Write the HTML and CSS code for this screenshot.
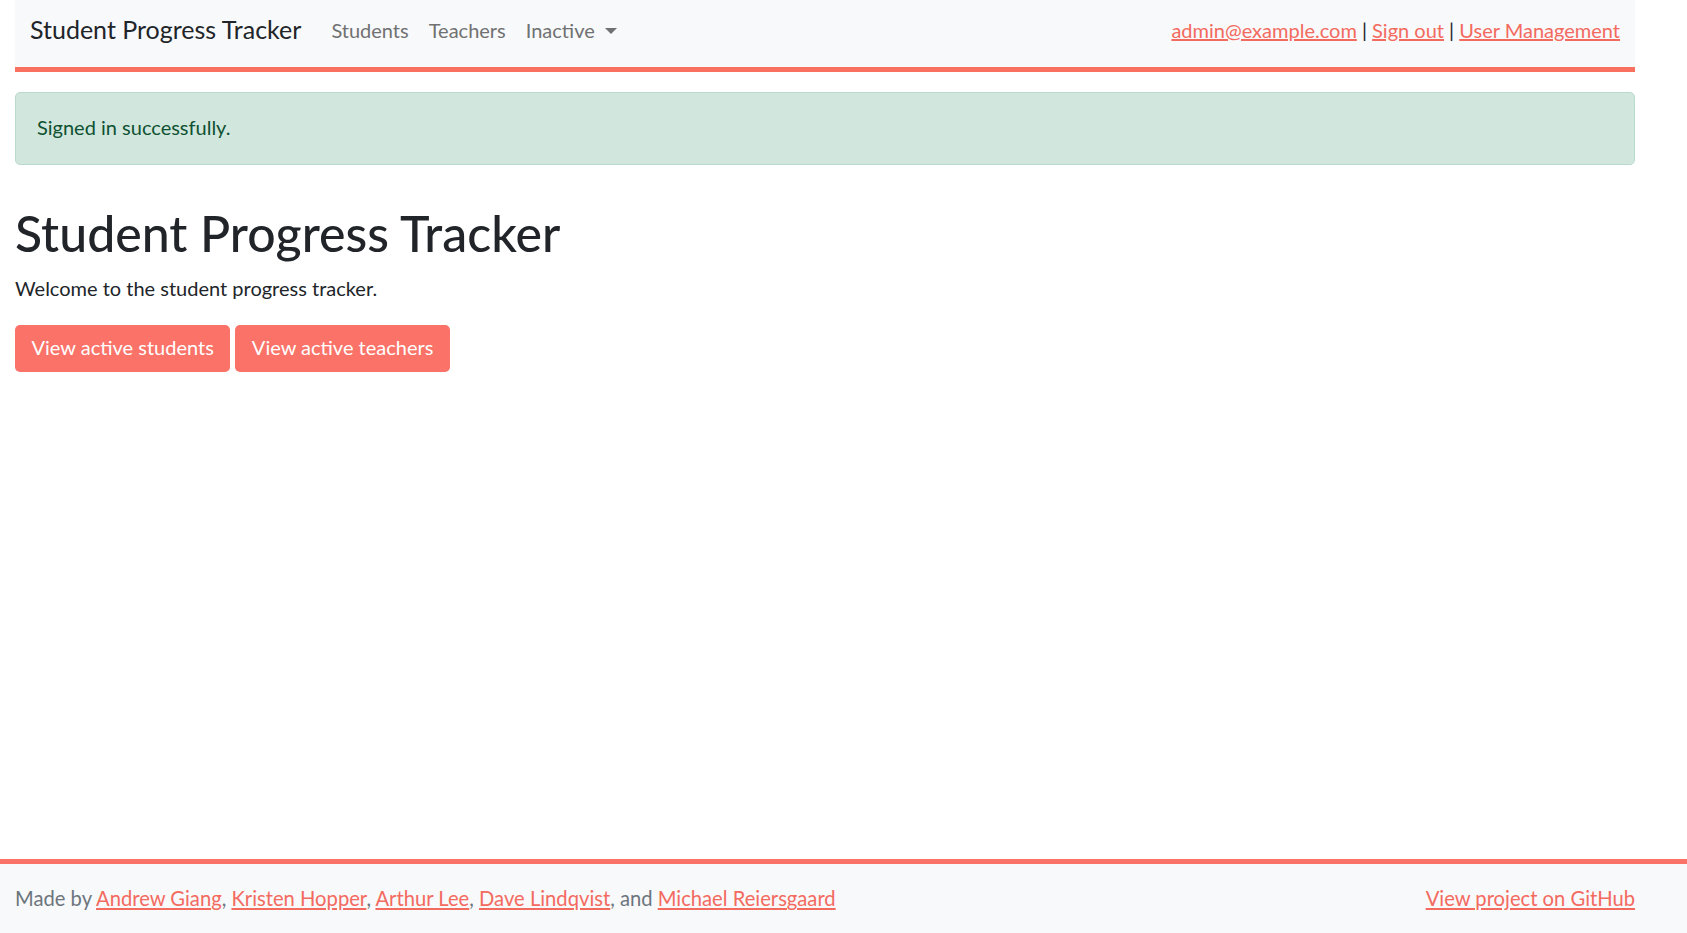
FILE: index.html
```html
<!DOCTYPE html>
<html lang="en">
<head>
<meta charset="utf-8">
<title>Student Progress Tracker</title>
<link rel="stylesheet" href="styles.css">
</head>
<body>
<div class="page">
  <nav class="navbar">
    <a class="brand" href="#">Student Progress Tracker</a>
    <ul class="nav-links">
      <li><a href="#">Students</a></li>
      <li><a href="#">Teachers</a></li>
      <li><a href="#" class="dropdown">Inactive<span class="caret"></span></a></li>
    </ul>
    <div class="nav-right">
      <a href="#">admin@example.com</a> | <a href="#">Sign out</a> | <a href="#">User Management</a>
    </div>
  </nav>
  <main class="content">
    <div class="alert">Signed in successfully.</div>
    <h1 class="title">Student Progress Tracker</h1>
    <p class="lead">Welcome to the student progress tracker.</p>
    <div class="actions">
      <a href="#" class="btn">View active students</a>
      <a href="#" class="btn">View active teachers</a>
    </div>
  </main>
</div>
<footer class="footer">
  <div class="footer-inner">
    <div class="credits">Made by <a href="#">Andrew Giang</a>, <a href="#">Kristen Hopper</a>, <a href="#">Arthur Lee</a>, <a href="#">Dave Lindqvist</a>, and <a href="#">Michael Reiersgaard</a></div>
    <a href="#" class="repo">View project on GitHub</a>
  </div>
</footer>
</body>
</html>
```

FILE: styles.css
```css
* { box-sizing: border-box; }
html, body { margin: 0; padding: 0; }
body {
  font-family: Lato, "Open Sans", sans-serif;
  font-size: 20px;
  line-height: 1.5;
  color: #212529;
  background: #fff;
  min-height: 100vh;
  display: flex;
  flex-direction: column;
}
a { color: #f36a5f; }
.page {
  flex: 1;
  width: 1620px;
  margin-left: 15px;
}
.navbar {
  display: flex;
  align-items: center;
  height: 72px;
  padding: 0 15px 7px;
  background: #f8f9fa;
  border-bottom: 5px solid #f9705f;
}
.brand {
  font-size: 25px;
  color: #212529;
  text-decoration: none;
  margin-right: 20px;
}
.nav-links {
  display: flex;
  list-style: none;
  margin: 0;
  padding: 0;
}
.nav-links a {
  display: block;
  padding: 0 10px;
  color: #707172;
  text-decoration: none;
}
.caret {
  display: inline-block;
  width: 0;
  height: 0;
  margin-left: 10px;
  vertical-align: 4px;
  border-top: 6px solid #707172;
  border-left: 6px solid transparent;
  border-right: 6px solid transparent;
}
.nav-right {
  margin-left: auto;
  color: #212529;
}
.content {
  padding-top: 20px;
}
.alert {
  background: #d1e7dd;
  border: 1px solid #badbcc;
  color: #0f5132;
  border-radius: 5px;
  height: 73px;
  padding: 0 21px 3px;
  display: flex;
  align-items: center;
}
.title {
  font-size: 50px;
  font-weight: 500;
  line-height: 60px;
  margin: 38px 0 10px;
}
.lead {
  margin: 0 0 22px;
}
.actions {
  display: flex;
  gap: 5px;
}
.btn {
  display: inline-block;
  background: #fa7268;
  color: #fff;
  text-decoration: none;
  border-radius: 5px;
  height: 47px;
  line-height: 45px;
  padding: 0 16.5px;
  font-size: 20px;
}
.footer {
  background: #f8f9fa;
  border-top: 5px solid #fa7268;
  height: 74px;
}
.footer-inner {
  width: 1620px;
  margin-left: 15px;
  height: 100%;
  display: flex;
  align-items: center;
  justify-content: space-between;
  font-size: 20.2px;
}
.credits {
  color: #6c757d;
}
```
